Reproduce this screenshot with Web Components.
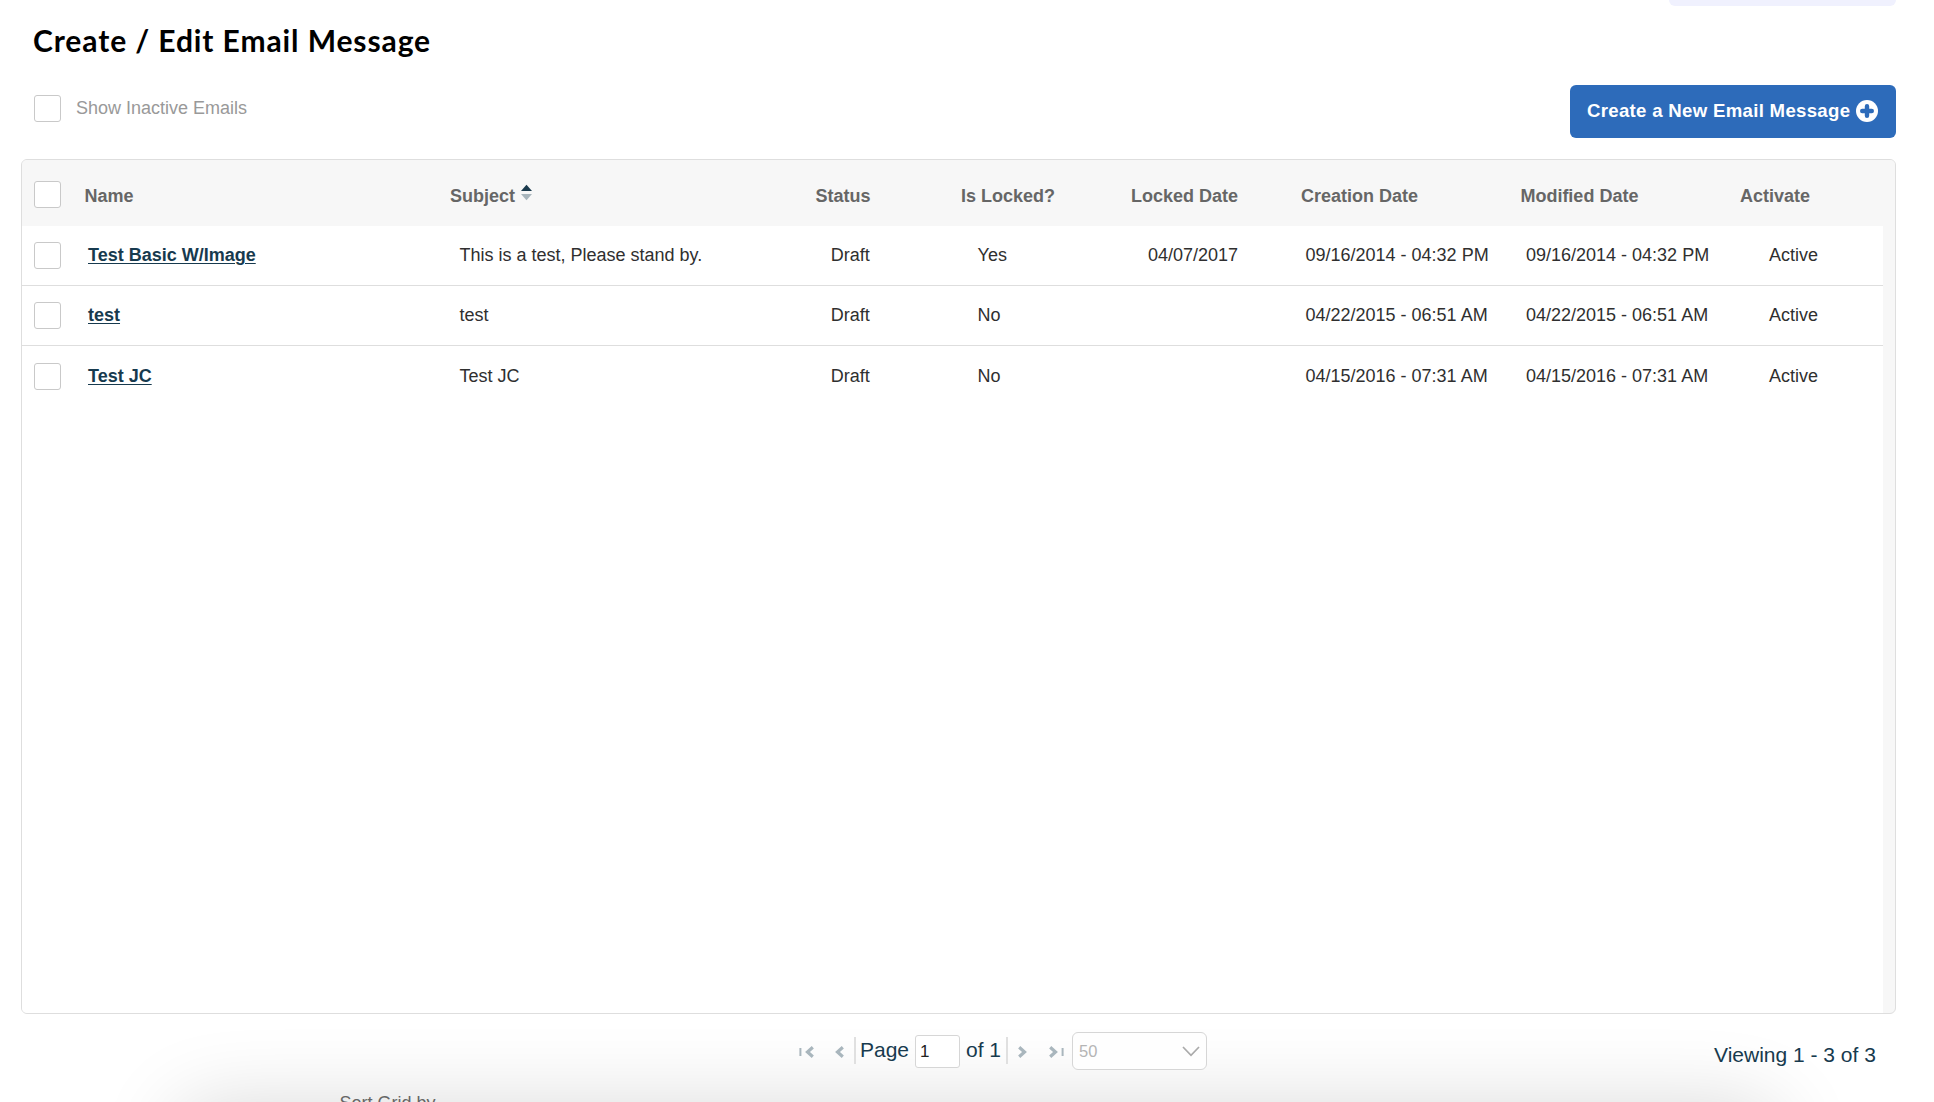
<!DOCTYPE html>
<html lang="en">
<head>
<meta charset="utf-8">
<title>Create / Edit Email Message</title>
<style>
html, body { margin: 0; height: 100%; overflow: hidden; background: #fff; }
body { font: 18px/24px "Liberation Sans", Arial, sans-serif; color: #333; }
</style>
</head>
<body>
<email-page></email-page>
<script>
function define(name, html, setup) {
  const tpl = document.createElement('template');
  tpl.innerHTML = html;
  customElements.define(name, class extends HTMLElement {
    constructor() {
      super();
      this.attachShadow({ mode: 'open' }).append(tpl.content.cloneNode(true));
    }
    connectedCallback() { if (setup) setup(this, this.shadowRoot); }
  });
}

define('check-box', `
<style>:host{display:block;box-sizing:border-box;width:27px;height:27px;border:1px solid #c9c9c9;border-radius:3px;background:#fff;flex:none}</style>`);

define('primary-button', `
<style>
:host{display:block}
button{display:flex;align-items:flex-start;box-sizing:border-box;width:326px;height:53px;padding:14px 0 0 17px;border:0;border-radius:6px;background:#2d6bba;color:#fff;font:bold 18.6px/24px "Liberation Sans",Arial,sans-serif;letter-spacing:.31px;white-space:nowrap}
span{width:268.5px;text-align:left}
svg{margin-top:.7px;flex:none}
</style>
<button><span><slot></slot></span><svg width="22" height="22" viewBox="0 0 22 22"><circle cx="11" cy="11" r="11" fill="#fff"/><path d="M11 6.2v9.6M6.2 11h9.6" stroke="#2d6bba" stroke-width="4.4" stroke-linecap="round"/></svg></button>`);

define('sort-icon', `
<style>:host{display:inline-block;width:11px;height:17px;margin-left:6px;vertical-align:top}svg{display:block}</style>
<svg width="11" height="17" viewBox="0 0 11 17"><path d="M5.5 .8 L11 7H0z" fill="#1a3a4d"/><path d="M0 10h11L5.5 16.2z" fill="#a8b5bc"/></svg>`);

define('grid-row', `
<style>
:host{display:grid;box-sizing:border-box;grid-template-columns:62px 366px 365px 146px 169px 170.5px 219.5px 220px 1fr;align-items:start;white-space:nowrap;color:#2f2f2f}
:host([head]){height:66px;font-weight:bold;color:#666;background:#f7f7f7}
:host([line]){border-bottom:1px solid #dedede}
:host(:not([head])){height:60px;width:1861px;background:#fff}
check-box{margin:16px 0 0 12px}
:host([head]) check-box{margin-top:21px}
.c{padding-top:17px}
:host([last]) check-box{margin-top:17px}
:host([last]) .c{padding-top:18px}
:host([head]) .c{padding-top:24px}
a{font-weight:bold;color:#173a4e;text-decoration:underline;text-decoration-thickness:1px;text-underline-offset:2px}
</style>
<check-box></check-box>`, (el, root) => {
  const head = el.hasAttribute('head');
  const indent = head ? [.6, 0, .5, 0, 1, .4, .4, 0] : [4, 9.5, 15.8, 16.6, 18, 5, 6, 29];
  el.getAttribute('cells').split('|').forEach((text, i) => {
    const cell = document.createElement('div');
    cell.className = 'c';
    cell.style.paddingLeft = indent[i] + 'px';
    const target = !head && i === 0 ? document.createElement('a') : document.createElement('span');
    target.textContent = text;
    cell.append(target);
    if (head && i === 1) cell.append(document.createElement('sort-icon'));
    root.append(cell);
  });
});

define('email-grid', `
<style>:host{display:block;box-sizing:border-box;width:1875px;height:855px;margin:21px 0 0 21px;border:1px solid #dedede;border-radius:6px;overflow:hidden;background:#f7f7f7}
.body{width:1861px;height:787px;background:#fff}</style>
<grid-row head cells="Name|Subject|Status|Is Locked?|Locked Date|Creation Date|Modified Date|Activate"></grid-row>
<div class="body"><slot></slot></div>`);

define('page-arrow', `
<style>:host{display:block;padding-top:32px}svg{display:block}
:host([dir=next]) svg,:host([dir=last]) svg{transform:scaleX(-1)}</style>
<svg height="12" viewBox="0 0 15 12" width="15"><path class="bar" d="M1.4 2v8" stroke="#a9b6bd" stroke-width="2"/><path d="M13.8 1.3 L8.5 6l5.3 4.7" fill="none" stroke="#a9b6bd" stroke-width="3.2"/></svg>`, (el, root) => {
  const dir = el.getAttribute('dir');
  if (dir === 'prev' || dir === 'next') {
    root.querySelector('.bar').remove();
    const svg = root.querySelector('svg');
    svg.setAttribute('viewBox', '6 0 9 12');
    svg.setAttribute('width', '9');
  }
});

define('grid-pager', `
<style>
:host{display:grid;height:76px;grid-template-columns:799px 36px 19px 6px 55px 51px 40px 12px 31px 23px 642px 1fr;align-items:start;font-size:21px;color:#173a4e;white-space:nowrap}
.sep{width:2px;height:27px;margin-top:23px;background:#e0e0e0}
.t{padding-top:24px}
.num{box-sizing:border-box;width:45px;height:33px;margin-top:21px;border:1px solid #d6d6d6;border-radius:3px;background:#fff;color:#222;font-size:17px;line-height:31px;padding:0 0 0 4px}
.size{display:flex;justify-content:space-between;align-items:center;box-sizing:border-box;width:135px;height:38px;margin-top:18px;border:1px solid #d6d6d6;border-radius:6px;background:#fefefe;color:#b5b5b5;font-size:16.5px;padding:0 6px}
.view{padding-top:29px}
</style>
<i></i><page-arrow dir="first"></page-arrow><page-arrow dir="prev"></page-arrow><div class="sep"></div>
<div class="t">Page</div><div class="num">1</div><div class="t">of 1</div><div class="sep"></div>
<page-arrow dir="next"></page-arrow><page-arrow dir="last"></page-arrow>
<div class="size"><span>50</span><svg width="18" height="11" viewBox="0 0 18 11"><path d="M1 1l8 8.3L17 1" fill="none" stroke="#aaa" stroke-width="1.7"/></svg></div>
<div class="view">Viewing 1 - 3 of 3</div>`);

define('email-page', `
<style>
:host{display:block;width:1934px;height:1102px;overflow:hidden;position:relative;background:#fff}
.top{height:6px;width:227px;margin-left:1669px;border-radius:0 0 8px 8px;background:#f0f1fe}
h1{margin:14px 0 0 33px;height:40px;font:bold 30px/40px Lato,"Open Sans",sans-serif;letter-spacing:.9px;color:#000}
.tools{display:flex;align-items:flex-start;height:53px;margin:25px 38px 0 34px}
.tools check-box{margin-top:10px}
.label{flex:1;padding:11px 0 0 15px;color:#999}
.shade{position:absolute;left:180px;top:1108px;width:1595px;height:400px;border-radius:20px;box-shadow:0 0 84px rgba(0,0,0,.165)}
.over{position:relative}
.sort{margin:1px 0 0 339.5px;color:#666}
</style>
<div class="shade"></div>
<div class="over">
<div class="top"></div>
<h1>Create / Edit Email Message</h1>
<div class="tools"><check-box></check-box><div class="label">Show Inactive Emails</div><primary-button>Create a New Email Message</primary-button></div>
<email-grid>
<grid-row line cells="Test Basic W/Image|This is a test, Please stand by.|Draft|Yes|04/07/2017|09/16/2014 - 04:32 PM|09/16/2014 - 04:32 PM|Active"></grid-row>
<grid-row line cells="test|test|Draft|No||04/22/2015 - 06:51 AM|04/22/2015 - 06:51 AM|Active"></grid-row>
<grid-row last cells="Test JC|Test JC|Draft|No||04/15/2016 - 07:31 AM|04/15/2016 - 07:31 AM|Active"></grid-row>
</email-grid>
<grid-pager></grid-pager>
<div class="sort">Sort Grid by</div>
</div>`);
</script>
</body>
</html>
